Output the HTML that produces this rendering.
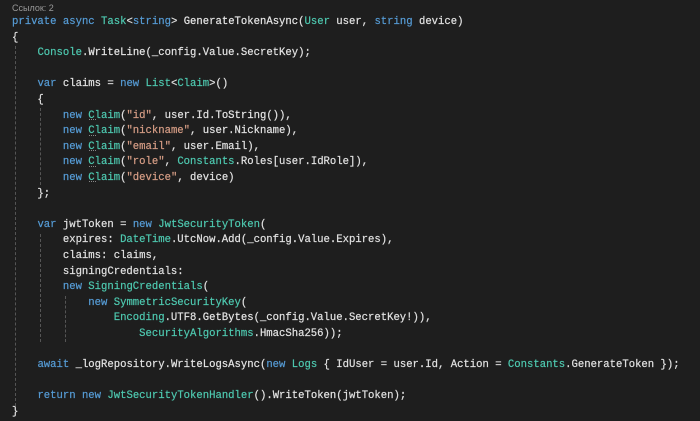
<!DOCTYPE html>
<html><head><meta charset="utf-8"><style>
html,body{margin:0;padding:0;background:#1e1e1e;width:700px;height:421px;overflow:hidden}
.lbl{position:absolute;left:12px;top:3px;font:9px "Liberation Sans",sans-serif;color:#999}
pre{position:absolute;left:12px;top:15px;margin:0;font:10.6px/15.6px "Liberation Mono",monospace;color:#e2e2e2;-webkit-text-stroke:0.2px currentColor}
.k{color:#569cd6}.t{color:#4ec9b0}.m{color:#e6e6e6}.s{color:#d69d85}
.g{position:absolute;border-left:1px dashed #555;width:0}
.d{position:absolute;left:89px;width:7px;border-top:1px dotted #888;height:0}
</style></head><body>
<div class="lbl">Ссылок: 2</div>
<div class="g" style="left:15px;top:46px;height:360px"></div>
<div class="g" style="left:40px;top:108px;height:77px"></div>
<div class="g" style="left:40px;top:234px;height:108px"></div>
<div class="g" style="left:65px;top:296px;height:46px"></div>
<div class="d" style="top:119px"></div>
<div class="d" style="top:135px"></div>
<div class="d" style="top:150px"></div>
<div class="d" style="top:166px"></div>
<div class="d" style="top:181px"></div>
<pre><span class="k">private</span> <span class="k">async</span> <span class="t">Task</span>&lt;<span class="k">string</span>&gt; <span class="m">GenerateTokenAsync</span>(<span class="t">User</span> user, <span class="k">string</span> device)
{
    <span class="t">Console</span>.<span class="m">WriteLine</span>(_config.Value.SecretKey);

    <span class="k">var</span> claims = <span class="k">new</span> <span class="t">List</span>&lt;<span class="t">Claim</span>&gt;()
    {
        <span class="k">new</span> <span class="t">Claim</span>(<span class="s">"id"</span>, user.Id.<span class="m">ToString</span>()),
        <span class="k">new</span> <span class="t">Claim</span>(<span class="s">"nickname"</span>, user.Nickname),
        <span class="k">new</span> <span class="t">Claim</span>(<span class="s">"email"</span>, user.Email),
        <span class="k">new</span> <span class="t">Claim</span>(<span class="s">"role"</span>, <span class="t">Constants</span>.Roles[user.IdRole]),
        <span class="k">new</span> <span class="t">Claim</span>(<span class="s">"device"</span>, device)
    };

    <span class="k">var</span> jwtToken = <span class="k">new</span> <span class="t">JwtSecurityToken</span>(
        expires: <span class="t">DateTime</span>.UtcNow.<span class="m">Add</span>(_config.Value.Expires),
        claims: claims,
        signingCredentials:
        <span class="k">new</span> <span class="t">SigningCredentials</span>(
            <span class="k">new</span> <span class="t">SymmetricSecurityKey</span>(
                <span class="t">Encoding</span>.UTF8.<span class="m">GetBytes</span>(_config.Value.SecretKey!)),
                    <span class="t">SecurityAlgorithms</span>.HmacSha256));

    <span class="k">await</span> _logRepository.<span class="m">WriteLogsAsync</span>(<span class="k">new</span> <span class="t">Logs</span> { IdUser = user.Id, Action = <span class="t">Constants</span>.GenerateToken });

    <span class="k">return</span> <span class="k">new</span> <span class="t">JwtSecurityTokenHandler</span>().<span class="m">WriteToken</span>(jwtToken);
}</pre>
</body></html>
